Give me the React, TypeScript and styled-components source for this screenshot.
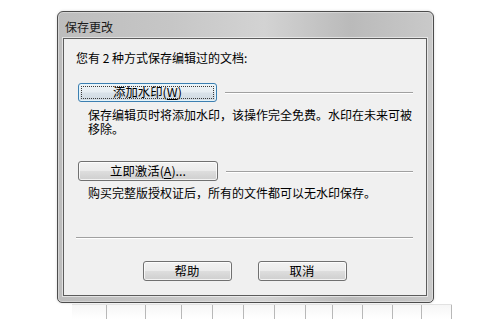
import React from 'react';
import { createGlobalStyle, css, styled } from 'styled-components';

const GlobalStyle = createGlobalStyle`
  html, body {
    margin: 0;
    padding: 0;
    background: #ffffff;
  }
  body {
    font-family: "Noto Sans CJK SC", "Noto Sans", sans-serif;
    color: #000;
  }
`;

interface ButtonProps {
  $focused?: boolean;
  $width?: number;
}

const cells = [34, 38, 35, 30, 30, 30, 30, 26, 29, 29, 28, 29];

const App: React.FC = () => {
  return (
    <Page>
      <GlobalStyle />
      <Window>
        <TitleBar>保存更改</TitleBar>
        <Client>
          <Intro>您有 2 种方式保存编辑过的文档:</Intro>
          <OptionRow>
            <DialogButton $focused $width={139}>
              添加水印(<u>W</u>)
            </DialogButton>
            <RowLine />
          </OptionRow>
          <Description>
            保存编辑页时将添加水印，该操作完全免费。水印在未来可被
            <br />
            移除。
          </Description>
          <OptionRow $gap={25}>
            <DialogButton $width={140}>
              立即激活(<u>A</u>)...
            </DialogButton>
            <RowLine />
          </OptionRow>
          <Description $gap={5}>购买完整版授权证后，所有的文件都可以无水印保存。</Description>
          <Separator />
          <Footer>
            <DialogButton $width={89}>帮助</DialogButton>
            <DialogButton $width={89}>取消</DialogButton>
          </Footer>
        </Client>
      </Window>
      <SheetStrip>
        {cells.map((w, i) => (
          <SheetCell key={i} style={{ width: w }} />
        ))}
      </SheetStrip>
    </Page>
  );
};

const Page = styled.div`
  width: 501px;
  height: 320px;
  overflow: hidden;
  padding: 11px 0 0 57px;
  box-sizing: border-box;
`;

const Window = styled.div`
  width: 377px;
  height: 292px;
  box-sizing: border-box;
  border: 1px solid #4c4c4c;
  border-radius: 6px 6px 5px 5px;
  background: linear-gradient(
    90deg,
    #bdbdbd 0%,
    #c6c6c6 30%,
    #d3d3d3 55%,
    #bababa 78%,
    #c9c9c9 100%
  );
  box-shadow: inset 0 0 0 1px rgba(255, 255, 255, 0.35), 0 0 3px rgba(0, 0, 0, 0.15);
  display: flex;
  flex-direction: column;
`;

const TitleBar = styled.div`
  height: 26px;
  padding-left: 7px;
  display: flex;
  align-items: center;
  padding-top: 2px;
  box-sizing: border-box;
  font-size: 12px;
  color: #1a1a1a;
`;

const Client = styled.div`
  margin: 0 6px 6px 5px;
  height: 258px;
  box-sizing: border-box;
  border: 1px solid #5c5c5c;
  box-shadow: 0 0 0 1px rgba(255, 255, 255, 0.55);
  background: #f0f0f0;
  padding: 11px 13px 0 12px;
  display: flex;
  flex-direction: column;
  font-size: 12px;
`;

const Intro = styled.div`
  line-height: 16px;
  white-space: nowrap;
`;

const OptionRow = styled.div<{ $gap?: number }>`
  display: flex;
  align-items: center;
  margin-top: ${(p) => p.$gap ?? 17}px;
  padding-left: 2px;
`;

const RowLine = styled.div`
  flex: 1;
  height: 1px;
  margin-left: 8px;
  background: #a0a0a0;
  box-shadow: 0 1px 0 #ffffff;
`;

const Description = styled.div<{ $gap?: number }>`
  margin-top: ${(p) => p.$gap ?? 6}px;
  padding-left: 12px;
  line-height: 14px;
  white-space: nowrap;
`;

const Separator = styled.div`
  margin-top: 37px;
  height: 1px;
  background: #a0a0a0;
  box-shadow: 0 1px 0 #ffffff;
`;

const Footer = styled.div`
  display: flex;
  justify-content: center;
  gap: 26px;
  margin-top: 23px;
`;

const DialogButton = styled.div<ButtonProps>`
  position: relative;
  width: ${(p) => p.$width ?? 89}px;
  height: 20px;
  box-sizing: border-box;
  border: 1px solid #707070;
  border-radius: 3px;
  background: linear-gradient(#f2f2f2 0%, #ebebeb 48%, #dddddd 52%, #cfcfcf 100%);
  box-shadow: inset 0 0 0 1px rgba(255, 255, 255, 0.75);
  display: flex;
  align-items: center;
  justify-content: center;
  font-size: 12.4px;
  line-height: 1;
  color: #000;

  u {
    text-underline-offset: 2px;
  }

  ${(p) =>
    p.$focused &&
    css`
      height: 19px;
      border-color: #3c7fb1;
      background: linear-gradient(#eef3f6 0%, #e6edf2 48%, #d9e2e9 52%, #d0dae2 100%);
      box-shadow: inset 0 0 0 1px rgba(230, 245, 252, 0.9);

      &::after {
        content: '';
        position: absolute;
        inset: 2px;
        border: 1px dotted #3a3a3a;
        border-radius: 1px;
      }
    `}
`;

const SheetStrip = styled.div`
  display: flex;
  width: max-content;
  margin: 1px 0 0 15px;
  height: 14px;
  border-top: 1px solid #e2e2e2;
`;

const SheetCell = styled.div`
  height: 100%;
  border-right: 1px solid #b8b8b8;
  background: linear-gradient(#f6f6f6, #ffffff);
`;

export default App;
